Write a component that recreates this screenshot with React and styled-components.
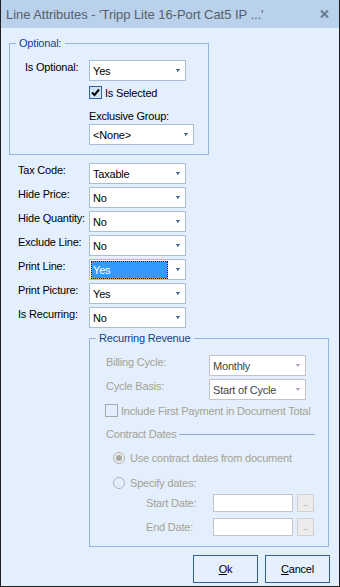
import styled, { createGlobalStyle } from "styled-components";

const GlobalStyle = createGlobalStyle`
  html, body {
    margin: 0;
    padding: 0;
    background: #ffffff;
  }
  body {
    font-family: "Liberation Sans", Arial, sans-serif;
    font-size: 11px;
    letter-spacing: -0.2px;
  }
  * {
    box-sizing: border-box;
  }
`;

const Window = styled.div`
  width: 340px;
  height: 587px;
  display: flex;
  flex-direction: column;
  background: #e3effd;
  border: 1px solid #1e1e1e;
  border-top: none;
  overflow: hidden;
`;

const TitleBar = styled.div`
  height: 28px;
  flex-shrink: 0;
  display: flex;
  align-items: center;
  justify-content: space-between;
  padding: 0 10px 0 5px;
  background: #b9d1ea;
`;

const Title = styled.span`
  font-size: 13px;
  letter-spacing: -0.05px;
  color: #56606c;
  white-space: nowrap;
`;

const Content = styled.div`
  flex: 1;
  display: flex;
  flex-direction: column;
  padding: 8px 9px 0 8px;
`;

const Group = styled.fieldset`
  margin: ${(p) => p.$top || 0}px 0 0 ${(p) => p.$indent || 0}px;
  padding: 0;
  min-width: 0;
  width: ${(p) => p.$width}px;
  border: 1px solid #94b5dd;
`;

const Legend = styled.legend`
  margin-left: 6px;
  padding: 0 4px 0 3px;
  line-height: 14px;
  color: #15428b;
`;

const GroupBody = styled.div`
  padding: 10px 0 ${(p) => p.$bottom}px ${(p) => p.$left}px;
`;

const Form = styled.div`
  display: flex;
  flex-direction: column;
  gap: 3px;
  margin: 8px 0 0 9px;
`;

const FieldRow = styled.div`
  display: grid;
  grid-template-columns: ${(p) => p.$label}px auto;
  align-items: start;
  margin-top: ${(p) => p.$top || 0}px;
`;

const Label = styled.span`
  line-height: 14px;
  white-space: nowrap;
  color: ${(p) => (p.$disabled ? "#a5a293" : "#000000")};
`;

const Combo = styled.div`
  width: ${(p) => p.$w}px;
  height: 21px;
  display: flex;
  align-items: center;
  padding: 0 5px 0 2px;
  background: #ffffff;
  border: 1px solid ${(p) => (p.$disabled ? "#c4c4c4" : "#a7bdd9")};
  color: ${(p) => (p.$disabled ? "#444444" : "#000000")};
`;

const ComboValue = styled.span`
  flex: 1;
  height: 16px;
  line-height: 16px;
  margin-right: 8px;
  padding-left: 1px;
  white-space: nowrap;
  ${(p) =>
    p.$selected &&
    `
    background: #3399ff;
    color: #ffffff;
    outline: 1px dotted #1a1a1a;
    box-shadow: 0 0 0 1px #f29a2e;
  `}
`;

const Indented = styled.div`
  margin-left: ${(p) => p.$left}px;
  margin-top: ${(p) => p.$top || 0}px;
`;

const CheckRow = styled.div`
  display: flex;
  align-items: center;
  gap: 3px;
  height: 13px;
  margin: ${(p) => p.$top || 0}px 0 0 ${(p) => p.$left || 0}px;
  color: ${(p) => (p.$disabled ? "#a5a293" : "#000000")};
`;

const Box = styled.span`
  width: 13px;
  height: 13px;
  flex-shrink: 0;
  display: flex;
  align-items: center;
  justify-content: center;
  border: 1px solid ${(p) => (p.$disabled ? "#a9a9a9" : "#2f62a0")};
  background: ${(p) => (p.$disabled ? "transparent" : "#d3e3f6")};
`;

const SubHead = styled.div`
  display: flex;
  align-items: center;
  gap: 2px;
  margin: 10px 13px 0 0;
  line-height: 14px;
  color: #a5a293;
  &::after {
    content: "";
    flex: 1;
    border-top: 1px solid #90acd0;
  }
`;

const RadioRow = styled.div`
  display: flex;
  align-items: center;
  gap: 5px;
  height: 14px;
  margin: ${(p) => p.$top}px 0 0 7px;
  color: #a5a293;
`;

const Radio = styled.span`
  width: 12px;
  height: 12px;
  border-radius: 50%;
  border: 1px solid #b2b2b2;
  display: flex;
  align-items: center;
  justify-content: center;
  background: ${(p) => (p.$checked ? "#ececec" : "transparent")};
  &::after {
    content: "";
    width: 6px;
    height: 6px;
    border-radius: 50%;
    background: ${(p) => (p.$checked ? "#a9a9a9" : "transparent")};
  }
`;

const DateRow = styled.div`
  display: grid;
  grid-template-columns: 63px 80px 17px;
  column-gap: 4px;
  align-items: center;
  margin: ${(p) => p.$top}px 0 0 40px;
`;

const DateInput = styled.div`
  height: 18px;
  background: #ffffff;
  border: 1px solid #c4c4c4;
`;

const DotsButton = styled.div`
  height: 18px;
  display: flex;
  align-items: flex-end;
  justify-content: center;
  padding-bottom: 3px;
  font-size: 9px;
  line-height: 9px;
  color: #9a9a9a;
  background: #ececec;
  border: 1px solid #d0d0d0;
`;

const Footer = styled.div`
  display: flex;
  justify-content: flex-end;
  gap: 7px;
  margin-top: 8px;
`;

const DialogButton = styled.div`
  width: 65px;
  height: 28px;
  display: flex;
  align-items: center;
  justify-content: center;
  border: 1px solid #30609c;
  background: #e6f0fd;
  color: #000000;
  u {
    text-decoration: underline;
  }
`;

const Arrow = ({ disabled }) => (
  <svg width="5" height="3" viewBox="0 0 5 3" shapeRendering="crispEdges">
    <path d="M0 0H5L3 2H2Z M2 2H3V3H2Z" fill={disabled ? "#b89ec6" : "#4d6d9c"} />
  </svg>
);

const Select = ({ value, w = 97, disabled, selected }) => (
  <Combo $w={w} $disabled={disabled}>
    <ComboValue $selected={selected}>{value}</ComboValue>
    <Arrow disabled={disabled} />
  </Combo>
);

const Check = ({ checked, disabled }) => (
  <Box $disabled={disabled}>
    {checked && (
      <svg width="9" height="9" viewBox="0 0 9 9">
        <path d="M1 4.5L3.5 7L8 1.5" fill="none" stroke="#000" strokeWidth="2" />
      </svg>
    )}
  </Box>
);

const rows = [
  ["Tax Code:", "Taxable"],
  ["Hide Price:", "No"],
  ["Hide Quantity:", "No"],
  ["Exclude Line:", "No"],
  ["Print Line:", "Yes", true],
  ["Print Picture:", "Yes"],
  ["Is Recurring:", "No"],
];

export default function App() {
  return (
    <>
      <GlobalStyle />
      <Window>
        <TitleBar>
          <Title>Line Attributes - 'Tripp Lite 16-Port Cat5 IP ...'</Title>
          <svg width="9" height="8" viewBox="0 0 9 8">
            <path d="M1 0.5L8 7.5M8 0.5L1 7.5" stroke="#6f7f93" strokeWidth="2.2" />
          </svg>
        </TitleBar>
        <Content>
          <Group $width={200}>
            <Legend>Optional:</Legend>
            <GroupBody $left={15} $bottom={9}>
              <FieldRow $label={64}>
                <Label>Is Optional:</Label>
                <Select value="Yes" />
              </FieldRow>
              <Indented $left={64}>
                <CheckRow $top={5}>
                  <Check checked />
                  <span>Is Selected</span>
                </CheckRow>
                <Indented $left={0} $top={10}>
                  <Label>Exclusive Group:</Label>
                </Indented>
                <Indented $left={0} $top={1}>
                  <Select value="<None>" w={105} />
                </Indented>
              </Indented>
            </GroupBody>
          </Group>

          <Form>
            {rows.map(([label, value, selected]) => (
              <FieldRow key={label} $label={71}>
                <Label>{label}</Label>
                <Select value={value} selected={selected} />
              </FieldRow>
            ))}
          </Form>

          <Group $width={240} $indent={80} $top={3}>
            <Legend>Recurring Revenue</Legend>
            <GroupBody $left={16} $bottom={10}>
              <FieldRow $label={103}>
                <Label $disabled>Billing Cycle:</Label>
                <Select value="Monthly" disabled />
              </FieldRow>
              <FieldRow $label={103} $top={3}>
                <Label $disabled>Cycle Basis:</Label>
                <Select value="Start of Cycle" disabled />
              </FieldRow>
              <CheckRow $top={4} $left={-1} $disabled>
                <Check disabled />
                <span>Include First Payment in Document Total</span>
              </CheckRow>
              <SubHead>Contract Dates</SubHead>
              <RadioRow $top={10}>
                <Radio $checked />
                <span>Use contract dates from document</span>
              </RadioRow>
              <RadioRow $top={11}>
                <Radio />
                <span>Specify dates:</span>
              </RadioRow>
              <DateRow $top={4}>
                <Label $disabled>Start Date:</Label>
                <DateInput />
                <DotsButton>..</DotsButton>
              </DateRow>
              <DateRow $top={6}>
                <Label $disabled>End Date:</Label>
                <DateInput />
                <DotsButton>..</DotsButton>
              </DateRow>
            </GroupBody>
          </Group>

          <Footer>
            <DialogButton>
              <span>
                <u>O</u>k
              </span>
            </DialogButton>
            <DialogButton>
              <span>
                <u>C</u>ancel
              </span>
            </DialogButton>
          </Footer>
        </Content>
      </Window>
    </>
  );
}
